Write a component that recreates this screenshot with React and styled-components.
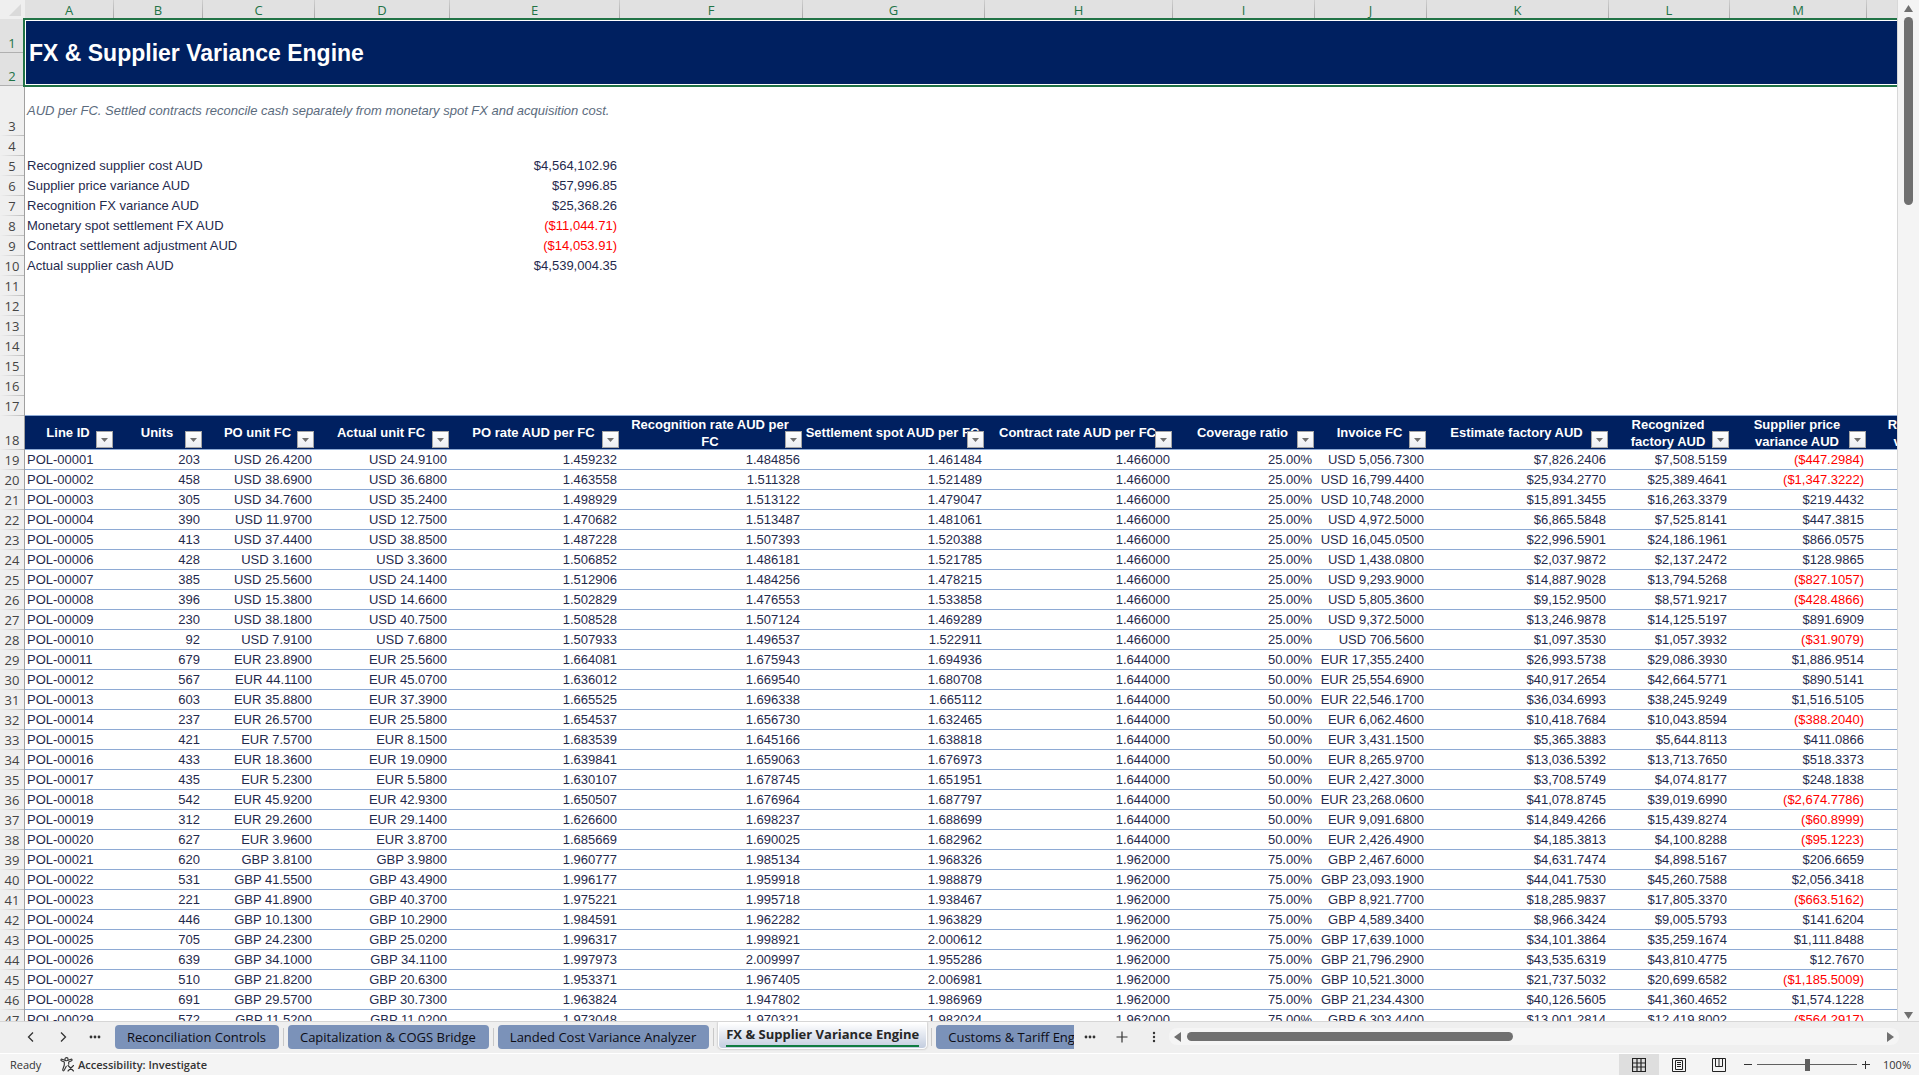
import React from "react";
import styled, { createGlobalStyle } from "styled-components";

const sheetFont = `"Liberation Sans", Arial, sans-serif`;
const uiFont = `"Open Sans", "Noto Sans", sans-serif`;

const color = {
  navy: "#002060",
  text: "#1f2a4d",
  rule: "#8eaad4",
  green: "#217346",
  red: "#ff0000",
  chrome: "#efefef",
  chromeActive: "#e1e1e1",
  thumb: "#707070",
  tab: "#7b92b9",
};

const GlobalStyle = createGlobalStyle`
  *, *::before, *::after { box-sizing: border-box; }
  body { margin: 0; background: #fff; }
  button { border: 0; padding: 0; margin: 0; background: none; font: inherit; color: inherit; }
`;

const Window = styled.div`
  display: flex;
  flex-direction: column;
  height: 100vh;
  overflow: hidden;
  font-family: ${uiFont};
  background: ${color.chrome};
`;

const Workspace = styled.main`
  display: flex;
  flex: 1;
  min-height: 0;
`;

const GridPane = styled.div`
  flex: 1;
  min-width: 0;
  overflow: hidden;
  background: #fff;
`;

const Grid = styled.table`
  table-layout: fixed;
  width: 2007px;
  border-collapse: separate;
  border-spacing: 0;
  font: 13px/18px ${sheetFont};
  color: ${color.text};
`;

const Row = styled.tr`
  height: ${(p) => p.$height || 20}px;
`;

const ColumnLabel = styled.th`
  padding: 0 1px 0 0;
  font: 13px/18px ${uiFont};
  color: ${color.green};
  background: linear-gradient(#cfcfcf, #a6a6a6) right / 1px 100% no-repeat ${color.chromeActive};
`;

const Corner = styled.th`
  padding: 0;
  background: ${color.chrome};
  svg { display: block; margin-left: 9px; }
`;

const RowLabel = styled.th`
  padding: 0 0 1px;
  vertical-align: bottom;
  text-align: center;
  font: 13px/18px ${uiFont};
  color: ${(p) => (p.$active ? color.green : "#444")};
  border-right: 1px solid #a0a0a0;
  background: ${(p) =>
    p.$active
      ? `linear-gradient(#b0b0b0, #b0b0b0) bottom / 100% 1px no-repeat ${color.chromeActive}`
      : `linear-gradient(90deg, ${color.chrome}, #bcbcbc) bottom / 100% 1px no-repeat ${color.chrome}`};
`;

const TitleCell = styled.td`
  position: relative;
  padding: 0 4px;
  background: ${color.navy};
  color: #fff;
  &::after {
    content: "";
    position: absolute;
    inset: -1px 0 -1px -2px;
    border: 2px solid ${color.green};
    border-right: 0;
    box-shadow: inset 1px 1px #fff, inset 0 -1px #fff;
    pointer-events: none;
  }
`;

const Title = styled.h1`
  margin: 0;
  font-size: 23px;
  line-height: 28px;
  font-weight: 700;
`;

const NoteCell = styled.td`
  padding: 0 2px;
  font-style: italic;
  color: #5b6b7d;
  white-space: nowrap;
`;

const Cell = styled.td`
  padding: 0 3px 0 2px;
  white-space: nowrap;
  text-align: ${(p) => (p.$left ? "left" : "right")};
  color: ${(p) => (p.$negative ? color.red : "inherit")};
  border-bottom: ${(p) => (p.$ruled ? `1px solid ${color.rule}` : "0")};
`;

const FieldHeader = styled.th`
  position: relative;
  padding: 0 4px 0 1px;
  background: ${color.navy};
  color: #fff;
  border-bottom: 1px solid ${color.rule};
`;

const FieldName = styled.div`
  display: flex;
  align-items: center;
  justify-content: center;
  height: 33px;
  line-height: 17px;
  text-align: center;
  white-space: pre;
`;

const FilterButton = styled.button`
  position: absolute;
  right: 1px;
  bottom: 1px;
  display: grid;
  place-items: center;
  width: 17px;
  height: 17px;
  border: 1px solid #a5a5a5;
  background: linear-gradient(#ffffff, #eceef2);
`;

const VerticalBar = styled.div`
  display: flex;
  flex-direction: column;
  align-items: center;
  width: 22px;
  padding: 5px 0 2px;
  border-left: 1px solid #d8d8d8;
  background: #f4f4f4;
`;

const VerticalTrack = styled.div`
  flex: 1;
  width: 9px;
  margin: 5px 0;
`;

const VerticalThumb = styled.div`
  height: 19%;
  border-radius: 5px;
  background: ${color.thumb};
`;

const ArrowButton = styled.button`
  display: grid;
  place-items: center;
`;

const TabBar = styled.nav`
  display: flex;
  align-items: center;
  height: 32px;
  padding: 0 20px 2px 0;
  border-top: 1px solid #d6d6d6;
`;

const TabNav = styled.div`
  display: flex;
  align-items: center;
  width: 115px;
  padding-left: 15px;
`;

const NavButton = styled.button`
  display: grid;
  place-items: center;
  width: 32px;
  height: 24px;
  color: #333;
`;

const TabList = styled.div`
  display: flex;
  align-items: flex-start;
  align-self: flex-start;
  flex: 4;
  min-width: 0;
  height: 31px;
  overflow: hidden;
`;

const Tab = styled.button`
  flex: none;
  height: ${(p) => (p.$active ? 27 : 24)}px;
  margin-top: ${(p) => (p.$active ? 0 : 3)}px;
  padding: ${(p) => (p.$active ? "0 7px" : "0 13px 1px 12px")};
  border-radius: ${(p) => (p.$active ? "0 0 4px 4px" : "4px")};
  font-size: 13px;
  line-height: 22px;
  font-weight: ${(p) => (p.$active ? 700 : 400)};
  color: ${(p) => (p.$active ? "#262626" : "#0c0c14")};
  white-space: nowrap;
  background: ${(p) => (p.$active ? "linear-gradient(#ffffff, #c3cddf)" : color.tab)};
  border: ${(p) => (p.$active ? "1px solid #fff" : "0")};
  box-shadow: ${(p) => (p.$active ? "0 0 2px #999" : "none")};
`;

const ActiveName = styled.span`
  display: block;
  height: 23px;
  line-height: 20px;
  border-bottom: 2px solid #107c41;
`;

const TabDivider = styled.span`
  flex: none;
  width: 1px;
  height: 18px;
  margin: 6px 4px 0;
  background: #c8c8c8;
`;

const TabTools = styled.div`
  display: flex;
  align-items: center;
  width: 95px;
`;

const HorizontalBar = styled.div`
  display: flex;
  align-items: center;
  flex: 3;
  height: 17px;
  padding: 0 5px;
  border-radius: 8px;
  background: #f5f5f5;
`;

const HorizontalTrack = styled.div`
  flex: 1;
  margin: 0 6px;
`;

const HorizontalThumb = styled.div`
  width: 47%;
  height: 9px;
  border-radius: 5px;
  background: ${color.thumb};
`;

const StatusBar = styled.footer`
  display: flex;
  align-items: stretch;
  height: 22px;
  padding: 0 8px 0 10px;
  border-top: 1px solid #fff;
  background: #f4f4f4;
  font-size: 11px;
  line-height: 21px;
  color: #333;
`;

const Ready = styled.span`
  width: 50px;
`;

const AccessibilityButton = styled.button`
  display: flex;
  align-items: center;
  gap: 3px;
  font-weight: 600;
`;

const StatusRight = styled.div`
  display: flex;
  align-items: center;
  margin-left: auto;
`;

const ViewButton = styled.button`
  display: grid;
  place-items: center;
  width: 40px;
  height: 21px;
  background: ${(p) => (p.$active ? "#dedede" : "none")};
`;

const ZoomButton = styled.button`
  display: grid;
  place-items: center;
  width: 18px;
  height: 21px;
`;

const ZoomSlider = styled.input`
  appearance: none;
  width: 100px;
  height: 12px;
  margin: 0;
  background: linear-gradient(#606060, #606060) center / 100% 1px no-repeat;
  &::-webkit-slider-thumb {
    appearance: none;
    width: 5px;
    height: 12px;
    background: #606060;
  }
`;

const ZoomLevel = styled.button`
  width: 36px;
  text-align: right;
`;

const Triangle = ({ points, width, height }) => (
  <svg width={width} height={height} viewBox={`0 0 ${width} ${height}`} aria-hidden="true">
    <polygon points={points} fill="#707070" />
  </svg>
);

const Ellipsis = () => (
  <svg width="12" height="4" viewBox="0 0 12 4" fill="currentColor" aria-hidden="true">
    <circle cx="2" cy="2" r="1.4" /><circle cx="6" cy="2" r="1.4" /><circle cx="10" cy="2" r="1.4" />
  </svg>
);

const Chevron = ({ d }) => (
  <svg width="8" height="12" viewBox="0 0 8 12" fill="none" stroke="currentColor" strokeWidth="1.3" aria-hidden="true">
    <path d={d} />
  </svg>
);

const columns = [
  ["A", 89, "Line ID"],
  ["B", 89, "Units"],
  ["C", 112, "PO unit FC"],
  ["D", 135, "Actual unit FC"],
  ["E", 170, "PO rate AUD per FC"],
  ["F", 183, "Recognition rate AUD per\nFC"],
  ["G", 182, "Settlement spot AUD per FC"],
  ["H", 188, "Contract rate AUD per FC"],
  ["I", 142, "Coverage ratio"],
  ["J", 112, "Invoice FC"],
  ["K", 182, "Estimate factory AUD"],
  ["L", 121, "Recognized\nfactory AUD"],
  ["M", 137, "Supplier price\nvariance AUD"],
  ["N", 140, "Recognition FX\nvariance AUD"],
];

const summary = [
  ["Recognized supplier cost AUD", "$4,564,102.96"],
  ["Supplier price variance AUD", "$57,996.85"],
  ["Recognition FX variance AUD", "$25,368.26"],
  ["Monetary spot settlement FX AUD", "($11,044.71)"],
  ["Contract settlement adjustment AUD", "($14,053.91)"],
  ["Actual supplier cash AUD", "$4,539,004.35"],
];

const groups = {
  USD: ["1.466000", "25.00%"],
  EUR: ["1.644000", "50.00%"],
  GBP: ["1.962000", "75.00%"],
};

// currency | units | PO unit | actual unit | PO rate | recognition | spot | invoice | estimate | recognized | variance
const lines = `USD 203 26.4200 24.9100 1.459232 1.484856 1.461484 5,056.7300 $7,826.2406 $7,508.5159 ($447.2984)
USD 458 38.6900 36.6800 1.463558 1.511328 1.521489 16,799.4400 $25,934.2770 $25,389.4641 ($1,347.3222)
USD 305 34.7600 35.2400 1.498929 1.513122 1.479047 10,748.2000 $15,891.3455 $16,263.3379 $219.4432
USD 390 11.9700 12.7500 1.470682 1.513487 1.481061 4,972.5000 $6,865.5848 $7,525.8141 $447.3815
USD 413 37.4400 38.8500 1.487228 1.507393 1.520388 16,045.0500 $22,996.5901 $24,186.1961 $866.0575
USD 428 3.1600 3.3600 1.506852 1.486181 1.521785 1,438.0800 $2,037.9872 $2,137.2472 $128.9865
USD 385 25.5600 24.1400 1.512906 1.484256 1.478215 9,293.9000 $14,887.9028 $13,794.5268 ($827.1057)
USD 396 15.3800 14.6600 1.502829 1.476553 1.533858 5,805.3600 $9,152.9500 $8,571.9217 ($428.4866)
USD 230 38.1800 40.7500 1.508528 1.507124 1.469289 9,372.5000 $13,246.9878 $14,125.5197 $891.6909
USD 92 7.9100 7.6800 1.507933 1.496537 1.522911 706.5600 $1,097.3530 $1,057.3932 ($31.9079)
EUR 679 23.8900 25.5600 1.664081 1.675943 1.694936 17,355.2400 $26,993.5738 $29,086.3930 $1,886.9514
EUR 567 44.1100 45.0700 1.636012 1.669540 1.680708 25,554.6900 $40,917.2654 $42,664.5771 $890.5141
EUR 603 35.8800 37.3900 1.665525 1.696338 1.665112 22,546.1700 $36,034.6993 $38,245.9249 $1,516.5105
EUR 237 26.5700 25.5800 1.654537 1.656730 1.632465 6,062.4600 $10,418.7684 $10,043.8594 ($388.2040)
EUR 421 7.5700 8.1500 1.683539 1.645166 1.638818 3,431.1500 $5,365.3883 $5,644.8113 $411.0866
EUR 433 18.3600 19.0900 1.639841 1.659063 1.676973 8,265.9700 $13,036.5392 $13,713.7650 $518.3373
EUR 435 5.2300 5.5800 1.630107 1.678745 1.651951 2,427.3000 $3,708.5749 $4,074.8177 $248.1838
EUR 542 45.9200 42.9300 1.650507 1.676964 1.687797 23,268.0600 $41,078.8745 $39,019.6990 ($2,674.7786)
EUR 312 29.2600 29.1400 1.626600 1.698237 1.688699 9,091.6800 $14,849.4266 $15,439.8274 ($60.8999)
EUR 627 3.9600 3.8700 1.685669 1.690025 1.682962 2,426.4900 $4,185.3813 $4,100.8288 ($95.1223)
GBP 620 3.8100 3.9800 1.960777 1.985134 1.968326 2,467.6000 $4,631.7474 $4,898.5167 $206.6659
GBP 531 41.5500 43.4900 1.996177 1.959918 1.988879 23,093.1900 $44,041.7530 $45,260.7588 $2,056.3418
GBP 221 41.8900 40.3700 1.975221 1.995718 1.938467 8,921.7700 $18,285.9837 $17,805.3370 ($663.5162)
GBP 446 10.1300 10.2900 1.984591 1.962282 1.963829 4,589.3400 $8,966.3424 $9,005.5793 $141.6204
GBP 705 24.2300 25.0200 1.996317 1.998921 2.000612 17,639.1000 $34,101.3864 $35,259.1674 $1,111.8488
GBP 639 34.1000 34.1100 1.997973 2.009997 1.955286 21,796.2900 $43,535.6319 $43,810.4775 $12.7670
GBP 510 21.8200 20.6300 1.953371 1.967405 2.006981 10,521.3000 $21,737.5032 $20,699.6582 ($1,185.5009)
GBP 691 29.5700 30.7300 1.963824 1.947802 1.986969 21,234.4300 $40,126.5605 $41,360.4652 $1,574.1228
GBP 572 11.5200 11.0200 1.973048 1.970321 1.982024 6,303.4400 $13,001.2814 $12,419.8002 ($564.2917)`
  .split("\n")
  .map((line, i) => {
    const [cur, units, po, actual, poRate, recRate, spot, invoice, est, rec, variance] = line.split(" ");
    const [contract, coverage] = groups[cur];
    return [
      `POL-${String(i + 1).padStart(5, "0")}`, units, `${cur} ${po}`, `${cur} ${actual}`, poRate, recRate,
      spot, contract, coverage, `${cur} ${invoice}`, est, rec, variance, "",
    ];
  });

const tabs = [
  "Reconciliation Controls",
  "Capitalization & COGS Bridge",
  "Landed Cost Variance Analyzer",
  "FX & Supplier Variance Engine",
  "Customs & Tariff Engine",
];
const activeTab = 3;

const isNegative = (value) => value.startsWith("(");
const emptyRows = [11, 12, 13, 14, 15, 16, 17];

function Spreadsheet() {
  return (
    <Grid>
      <colgroup>
        <col style={{ width: 25 }} />
        {columns.map(([id, width]) => <col key={id} style={{ width }} />)}
      </colgroup>
      <thead>
        <Row $height={19}>
          <Corner aria-label="Select all">
            <svg width="12" height="12" viewBox="0 0 12 12" aria-hidden="true"><path d="M12 0V12H0Z" fill="#dadada" /></svg>
          </Corner>
          {columns.map(([id]) => <ColumnLabel key={id} scope="col">{id}</ColumnLabel>)}
        </Row>
      </thead>
      <tbody>
        <Row $height={34}>
          <RowLabel $active scope="row">1</RowLabel>
          <TitleCell colSpan={14} rowSpan={2}><Title>FX &amp; Supplier Variance Engine</Title></TitleCell>
        </Row>
        <Row $height={33}><RowLabel $active scope="row">2</RowLabel></Row>
        <Row $height={50}>
          <RowLabel scope="row">3</RowLabel>
          <NoteCell colSpan={14}>
            AUD per FC. Settled contracts reconcile cash separately from monetary spot FX and acquisition cost.
          </NoteCell>
        </Row>
        <Row><RowLabel scope="row">4</RowLabel><Cell colSpan={14} /></Row>
        {summary.map(([name, value], i) => (
          <Row key={name}>
            <RowLabel scope="row">{i + 5}</RowLabel>
            <Cell $left colSpan={4}>{name}</Cell>
            <Cell $negative={isNegative(value)}>{value}</Cell>
            <Cell colSpan={9} />
          </Row>
        ))}
        {emptyRows.map((n) => (
          <Row key={n}><RowLabel scope="row">{n}</RowLabel><Cell colSpan={14} $ruled={n === 17} /></Row>
        ))}
        <Row $height={34}>
          <RowLabel scope="row">18</RowLabel>
          {columns.map(([id, , name]) => (
            <FieldHeader key={id} scope="col">
              <FieldName>{name}</FieldName>
              <FilterButton aria-label={`Filter ${name.replace("\n", " ")}`}>
                <Triangle width={7} height={4} points="0,0 7,0 3.5,4" />
              </FilterButton>
            </FieldHeader>
          ))}
        </Row>
        {lines.map((cells, i) => (
          <Row key={cells[0]}>
            <RowLabel scope="row">{i + 19}</RowLabel>
            {cells.map((value, c) => (
              <Cell key={columns[c][0]} $ruled $left={c === 0} $negative={isNegative(value)}>{value}</Cell>
            ))}
          </Row>
        ))}
      </tbody>
    </Grid>
  );
}

function SheetTabs() {
  return (
    <TabBar aria-label="Sheets">
      <TabNav>
        <NavButton aria-label="Previous sheet"><Chevron d="M6 1.5 1.5 6 6 10.5" /></NavButton>
        <NavButton aria-label="Next sheet"><Chevron d="M2 1.5 6.5 6 2 10.5" /></NavButton>
        <NavButton aria-label="More sheets before"><Ellipsis /></NavButton>
      </TabNav>
      <TabList>
        {tabs.map((name, i) => (
          <React.Fragment key={name}>
            {i > 0 && <TabDivider />}
            <Tab $active={i === activeTab}>{i === activeTab ? <ActiveName>{name}</ActiveName> : name}</Tab>
          </React.Fragment>
        ))}
      </TabList>
      <TabTools>
        <NavButton aria-label="More sheets after"><Ellipsis /></NavButton>
        <NavButton aria-label="New sheet">
          <svg width="12" height="12" viewBox="0 0 12 12" stroke="currentColor" strokeWidth="1.2" aria-hidden="true"><path d="M6 .5V11.5M.5 6H11.5" /></svg>
        </NavButton>
        <NavButton aria-label="Resize scroll bar">
          <svg width="4" height="12" viewBox="0 0 4 12" fill="currentColor" aria-hidden="true"><circle cx="2" cy="2" r="1.2" /><circle cx="2" cy="6" r="1.2" /><circle cx="2" cy="10" r="1.2" /></svg>
        </NavButton>
      </TabTools>
      <HorizontalBar>
        <ArrowButton aria-label="Scroll left"><Triangle width={7} height={10} points="7,0 7,10 0,5" /></ArrowButton>
        <HorizontalTrack><HorizontalThumb /></HorizontalTrack>
        <ArrowButton aria-label="Scroll right"><Triangle width={7} height={10} points="0,0 0,10 7,5" /></ArrowButton>
      </HorizontalBar>
    </TabBar>
  );
}

function Status() {
  return (
    <StatusBar>
      <Ready>Ready</Ready>
      <AccessibilityButton>
        <svg width="15" height="15" viewBox="0 0 15 15" fill="none" stroke="#333" strokeWidth="1.1" strokeLinecap="round" strokeLinejoin="round" aria-hidden="true">
          <circle cx="6.5" cy="2.2" r="1.6" />
          <path d="M4.9 3.3 2 2.2C.9 1.9.5 3.3 1.4 3.7L4.3 5V8L2.7 12.7C2.5 13.9 3.7 14.2 4.2 13.3L6.3 9.3M8.1 3.3 11 2.2C12.1 1.9 12.5 3.3 11.6 3.7L8.7 5V7.3" />
          <path d="M8 8.5 13.5 14M13.5 8.5 8 14" />
        </svg>
        Accessibility: Investigate
      </AccessibilityButton>
      <StatusRight>
        <ViewButton $active aria-label="Normal view">
          <svg width="14" height="14" viewBox="0 0 14 14" fill="none" stroke="#222" aria-hidden="true"><path d="M.5.5H13.5V13.5H.5ZM5 .5V13.5M9 .5V13.5M.5 5H13.5M.5 9H13.5" strokeWidth="1.2" /></svg>
        </ViewButton>
        <ViewButton aria-label="Page layout view">
          <svg width="14" height="14" viewBox="0 0 14 14" fill="none" stroke="#222" aria-hidden="true"><path d="M.5.5H13.5V13.5H.5ZM3.5 2.5H10.5V11.5H3.5ZM5 4.5H9M5 6.5H9M5 8.5H9" /></svg>
        </ViewButton>
        <ViewButton aria-label="Page break preview">
          <svg width="14" height="14" viewBox="0 0 14 14" fill="none" stroke="#222" aria-hidden="true"><path d="M.5.5H13.5V13.5H.5ZM3.5 .5V8.5H10.5V.5M7 .5V8.5" /></svg>
        </ViewButton>
        <ZoomButton aria-label="Zoom out">
          <svg width="8" height="8" viewBox="0 0 8 8" stroke="#333" aria-hidden="true"><path d="M0 3.5H8" /></svg>
        </ZoomButton>
        <ZoomSlider type="range" min="0" max="100" defaultValue="50" aria-label="Zoom" />
        <ZoomButton aria-label="Zoom in">
          <svg width="8" height="8" viewBox="0 0 8 8" stroke="#333" aria-hidden="true"><path d="M0 3.5H8M3.5 0V8" /></svg>
        </ZoomButton>
        <ZoomLevel>100%</ZoomLevel>
      </StatusRight>
    </StatusBar>
  );
}

export default function App() {
  return (
    <Window>
      <GlobalStyle />
      <Workspace>
        <GridPane><Spreadsheet /></GridPane>
        <VerticalBar>
          <ArrowButton aria-label="Scroll up"><Triangle width={9} height={7} points="4.5,0 9,7 0,7" /></ArrowButton>
          <VerticalTrack><VerticalThumb /></VerticalTrack>
          <ArrowButton aria-label="Scroll down"><Triangle width={9} height={7} points="0,0 9,0 4.5,7" /></ArrowButton>
        </VerticalBar>
      </Workspace>
      <SheetTabs />
      <Status />
    </Window>
  );
}
